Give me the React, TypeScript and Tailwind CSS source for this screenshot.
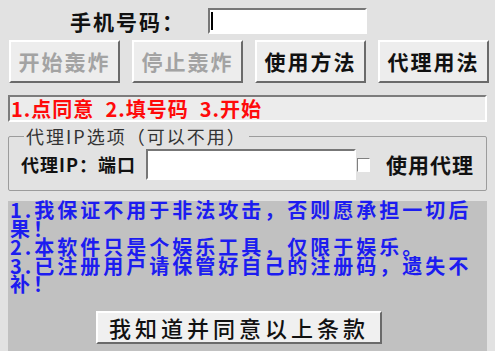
import React from "react";

// Old win32 dialog: phone field, four action buttons, a hint bar, a proxy group box
// and the terms panel with its agree button.

const font = { fontFamily: '"Noto Sans CJK SC", "Noto Sans", sans-serif' };

function RaisedButton({ label, disabled }: { label: string; disabled?: boolean }) {
  return (
    <button
      className={
        "flex h-[43px] w-[111px] items-center justify-center border-2 border-t-white border-l-white border-r-[#6a6a6a] border-b-[#6a6a6a] bg-[#ededed] text-[21px] font-bold tracking-[2px] " +
        (disabled ? "text-[#a3a3a3]" : "text-[#111]")
      }
    >
      {label}
    </button>
  );
}

export default function App() {
  return (
    <div className="flex h-[351px] w-[495px] flex-col overflow-hidden bg-[#e2e2e2]" style={font}>
      {/* phone number row */}
      <div className="flex h-[26px] items-center mt-[8px]">
        <span className="ml-[70px] w-[138px] text-[21px] font-bold leading-none tracking-[2px] text-[#111]">
          手机号码：
        </span>
        <div className="flex h-[26px] w-[159px] items-center border-2 border-t-[#777] border-l-[#777] border-b-white border-r-white bg-white">
          <div className="ml-[1px] h-[18px] w-[2px] bg-black" />
        </div>
      </div>

      {/* action buttons */}
      <div className="mt-[6px] flex gap-[12px] pl-[9px]">
        <RaisedButton label="开始轰炸" disabled />
        <RaisedButton label="停止轰炸" disabled />
        <RaisedButton label="使用方法" />
        <RaisedButton label="代理用法" />
      </div>

      {/* hint bar */}
      <div className="mx-[8px] mt-[12px] flex h-[27px] items-center border-2 border-t-[#7c7c7c] border-l-[#7c7c7c] border-b-white border-r-white bg-[#ececec] pl-[1px]">
        <span className="text-[20px] font-bold leading-none tracking-[1px] text-[#ff0a0a]">
          1.点同意&nbsp;&nbsp;2.填号码&nbsp;&nbsp;3.开始
        </span>
      </div>

      {/* proxy group box */}
      <fieldset className="mx-[8px] mt-[4px] h-[65px] rounded-[2px] border border-[#9c9c9c] pl-[12px] pr-[2px] pt-0">
        <legend className="ml-[3px] px-[2px] text-[18px] leading-[20px] tracking-[2px] text-[#333]">
          代理IP选项（可以不用）
        </legend>
        <div className="mt-[3px] flex items-center whitespace-nowrap">
          <span className="w-[125px] text-[18px] font-bold tracking-[1px] text-[#111]">代理IP：端口</span>
          <div className="h-[31px] w-[210px] border-2 border-t-[#777] border-l-[#777] border-b-white border-r-white bg-white" />
          <div className="ml-[1px] h-[14px] w-[13px] border border-t-[#808080] border-l-[#808080] border-b-white border-r-white bg-white" />
          <span className="ml-[16px] text-[21px] font-bold tracking-[1px] text-[#111]">使用代理</span>
        </div>
      </fieldset>

      {/* terms panel */}
      <div className="mx-[8px] mt-[10px] flex flex-1 flex-col bg-[#c1c1c1] pl-[2px]">
        <p className="text-[20px] font-bold leading-[18.5px] tracking-[3px] text-[#1c1cf0]">
          1.我保证不用于非法攻击，否则愿承担一切后果！
          <br />
          2.本软件只是个娱乐工具，仅限于娱乐。
          <br />
          3.已注册用户请保管好自己的注册码，遗失不补！
        </p>
        <button className="ml-[86px] mt-[17px] flex h-[33px] w-[286px] items-center justify-center border-2 border-t-white border-l-white border-r-[#6a6a6a] border-b-[#6a6a6a] bg-[#f0f0f0] text-[22px] font-medium tracking-[4px] text-[#111]">
          我知道并同意以上条款
        </button>
      </div>
    </div>
  );
}
